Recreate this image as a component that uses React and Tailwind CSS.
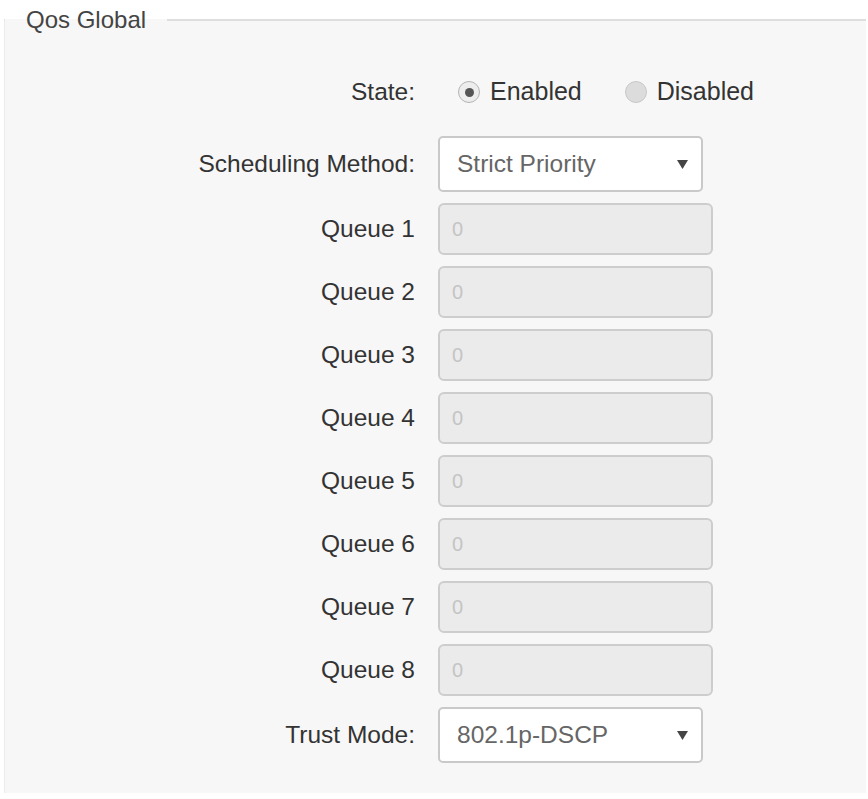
import React, { useState } from 'react';

const queues = [1, 2, 3, 4, 5, 6, 7, 8];

function Radio({ checked, label, onClick }) {
  return (
    <label className="flex items-center cursor-pointer" onClick={onClick}>
      {checked ? (
        <span className="w-[22px] h-[22px] rounded-full border border-[#b5b5b5] bg-[#ededed] flex items-center justify-center">
          <span className="w-[9px] h-[9px] rounded-full bg-[#555]" />
        </span>
      ) : (
        <span className="w-[22px] h-[22px] rounded-full border border-[#c8c8c8] bg-[#dcdcdc]" />
      )}
      <span className="ml-[10px] text-[25px] text-[#333]">{label}</span>
    </label>
  );
}

function Select({ value }) {
  return (
    <div className="w-[265px] h-[56px] bg-white border-2 border-[#c9c9c9] rounded-[5px] flex items-center justify-between pl-[17px] pr-[12px]">
      <span className="text-[24.5px] text-[#666]">{value}</span>
      <svg width="11" height="9" viewBox="0 0 11 9" className="mr-[1px]">
        <path d="M0 0 H11 L5.5 9 Z" fill="#444" />
      </svg>
    </div>
  );
}

function Row({ label, children, className = '' }) {
  return (
    <div className={`flex items-center ${className}`}>
      <div className="w-[410px] text-right text-[24.5px] text-[#333]">{label}</div>
      <div className="ml-[23px]">{children}</div>
    </div>
  );
}

export default function App() {
  const [enabled, setEnabled] = useState(true);

  return (
    <div className="w-[868px] h-[799px] bg-white" style={{ fontFamily: '"Liberation Sans", Arial, sans-serif' }}>
      <fieldset className="ml-[4px] mr-[2px] h-[793px] bg-[#f7f7f7] border-t-2 border-l border-r-0 border-b-0 border-t-[#dedede] border-l-[#ececec] p-0 m-0">
        <legend className="px-[21px] text-[24px] leading-[40px] text-[#444]">Qos Global</legend>

        <div className="pt-[30px]">
          <Row label="State:" className="h-[44px]">
            <div className="flex items-center pl-[20px]">
              <Radio checked={enabled} label="Enabled" onClick={() => setEnabled(true)} />
              <div className="ml-[43px]">
                <Radio checked={!enabled} label="Disabled" onClick={() => setEnabled(false)} />
              </div>
            </div>
          </Row>

          <div className="mt-[22px] flex flex-col gap-[11px]">
            <Row label="Scheduling Method:">
              <Select value="Strict Priority" />
            </Row>
            {queues.map((q) => (
              <Row key={q} label={`Queue ${q}`}>
                <div className="w-[275px] h-[52px] bg-[#ebebeb] border-2 border-[#cdcdcd] rounded-[6px] flex items-center pl-[12px] text-[20px] text-[#c4c4c4]">
                  0
                </div>
              </Row>
            ))}
            <Row label="Trust Mode:">
              <Select value="802.1p-DSCP" />
            </Row>
          </div>
        </div>
      </fieldset>
    </div>
  );
}
